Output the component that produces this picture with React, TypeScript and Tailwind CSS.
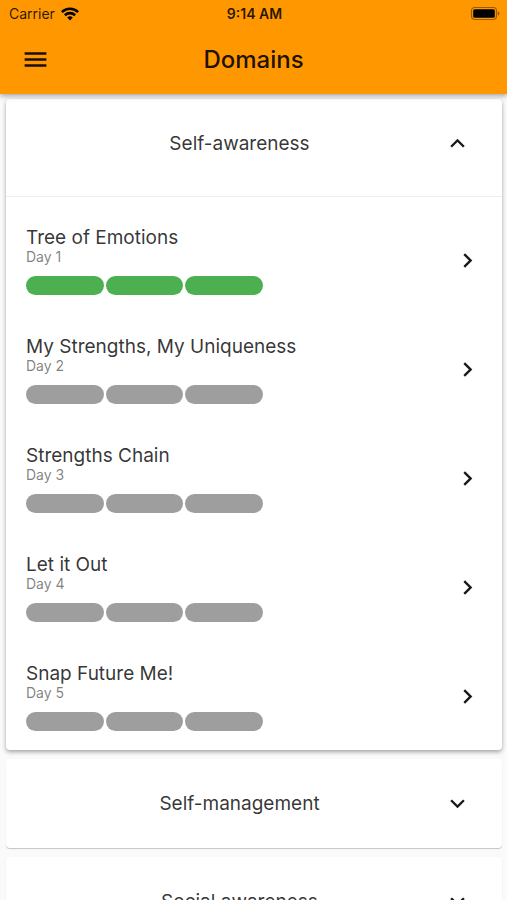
import { useState } from "react";
import { MdChevronRight, MdExpandLess, MdExpandMore, MdMenu } from "react-icons/md";

type Activity = { title: string; day: number; done: number };
type Domain = { name: string; activities: Activity[] };

const STEPS = [0, 1, 2];

const DOMAINS: Domain[] = [
  {
    name: "Self-awareness",
    activities: [
      { title: "Tree of Emotions", day: 1, done: 3 },
      { title: "My Strengths, My Uniqueness", day: 2, done: 0 },
      { title: "Strengths Chain", day: 3, done: 0 },
      { title: "Let it Out", day: 4, done: 0 },
      { title: "Snap Future Me!", day: 5, done: 0 },
    ],
  },
  { name: "Self-management", activities: [] },
  { name: "Social awareness", activities: [] },
];

function WifiIcon() {
  return (
    <svg width="18" height="14" viewBox="0 0 18 14" fill="none" stroke="currentColor" strokeWidth="2.6">
      <path d="M0.9 5.1a11.5 11.5 0 0 1 16.2 0" />
      <path d="M3.9 8.2a7.3 7.3 0 0 1 10.2 0" />
      <path d="M9 13.4 6.2 10.6a4 4 0 0 1 5.6 0z" fill="currentColor" stroke="none" />
    </svg>
  );
}

function BatteryIcon() {
  return (
    <svg width="30" height="14" viewBox="0 0 30 14">
      <rect x="1.5" y="0.5" width="25" height="12" rx="3.4" fill="none" stroke="#000" strokeOpacity="0.4" strokeWidth="1.2" />
      <rect x="3.2" y="2.2" width="21.6" height="8.6" rx="1.6" fill="#000" />
      <path d="M27.9 4.5v4c.9-.4 1.5-1.1 1.5-2s-.6-1.6-1.5-2z" fill="#000" fillOpacity="0.45" />
    </svg>
  );
}

function StatusBar() {
  return (
    <div className="grid grid-cols-3 items-center h-[27px] pl-[9px] pr-[7px] text-sm text-black/85">
      <div className="flex items-center gap-1.5">
        <span>Carrier</span>
        <span className="text-black">
          <WifiIcon />
        </span>
      </div>
      <span className="text-center font-semibold">9:14 AM</span>
      <div className="flex justify-end">
        <BatteryIcon />
      </div>
    </div>
  );
}

function ActivityRow({ title, day, done }: Activity) {
  return (
    <li>
      <button className="flex items-center justify-between w-full pt-[29px] pb-[11px] px-5 text-left">
        <span className="block">
          <span className="block text-[19px] leading-6 text-black/80">{title}</span>
          <span className="block text-sm leading-[14px] text-black/50">Day {day}</span>
          <span className="grid grid-cols-3 gap-0.5 w-[237px] mt-3">
            {STEPS.map((s) => (
              <span
                key={s}
                className={s < done ? "h-[19px] rounded-full bg-[#4caf50]" : "h-[19px] rounded-full bg-[#9e9e9e]"}
              />
            ))}
          </span>
        </span>
        <MdChevronRight size={29} className="text-black/90" />
      </button>
    </li>
  );
}

function DomainCard({ domain, open, onToggle }: { domain: Domain; open: boolean; onToggle: () => void }) {
  const Icon = open ? MdExpandLess : MdExpandMore;
  return (
    <section
      className={
        open
          ? "rounded bg-white shadow-[0_2px_4px_rgba(0,0,0,0.35)]"
          : "rounded bg-white shadow-[0_1px_1px_rgba(0,0,0,0.22)]"
      }
    >
      <div className={open ? "pb-2 border-b border-[#eeeeee]" : ""}>
        <button aria-expanded={open} onClick={onToggle} className="flex items-center w-full h-[89px] pl-10 pr-[30px]">
          <span className="flex-1 pr-2.5 text-center text-[19px] leading-6 text-black/80">{domain.name}</span>
          <Icon size={29} className="text-black/90" />
        </button>
      </div>
      {open && (
        <ul className="pb-2">
          {domain.activities.map((a) => (
            <ActivityRow key={a.day} {...a} />
          ))}
        </ul>
      )}
    </section>
  );
}

export default function App() {
  const [openName, setOpenName] = useState("Self-awareness");

  return (
    <div className="flex flex-col h-screen overflow-hidden bg-[#fafafa] font-['Inter',sans-serif]">
      <header className="relative z-10 bg-[#ff9800] shadow-[0_2px_5px_rgba(0,0,0,0.35)]">
        <StatusBar />
        <div className="grid grid-cols-[30px_1fr_30px] items-center h-[67px] px-5 pb-0.5">
          <button aria-label="Menu" className="flex justify-center">
            <MdMenu size={29} className="text-black/90" />
          </button>
          <h1 className="text-center text-2xl font-medium text-black/90">Domains</h1>
        </div>
      </header>
      <main className="flex flex-col flex-1 gap-[9px] min-h-0 overflow-y-auto pt-[5px] pl-1.5 pr-[5px] [scrollbar-width:none] *:shrink-0">
        {DOMAINS.map((d) => (
          <DomainCard
            key={d.name}
            domain={d}
            open={d.name === openName}
            onToggle={() => setOpenName(d.name === openName ? "" : d.name)}
          />
        ))}
      </main>
    </div>
  );
}
